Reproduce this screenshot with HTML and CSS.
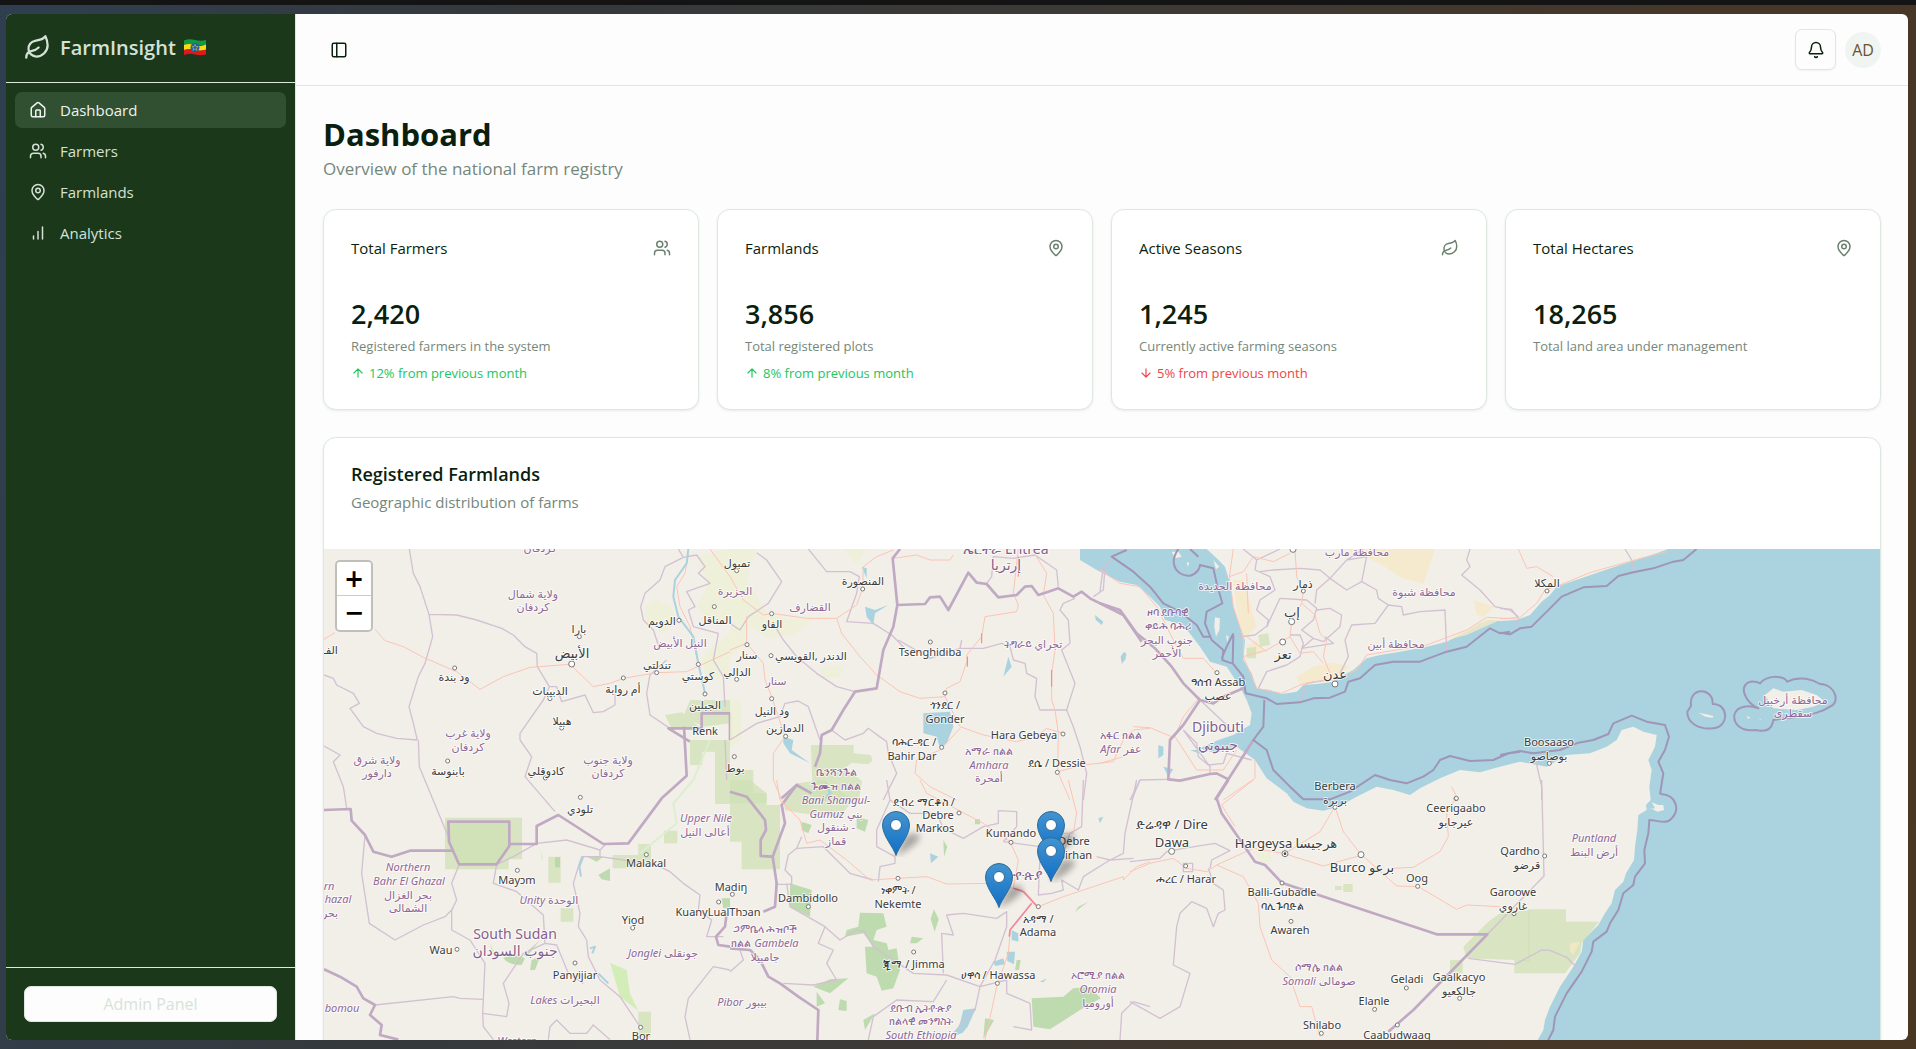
FILE: index.html
```html
<!DOCTYPE html>
<html lang="en">
<head>
<meta charset="utf-8">
<meta name="viewport" content="width=device-width, initial-scale=1">
<title>FarmInsight - Dashboard</title>
<link rel="stylesheet" href="styles.css">
</head>
<body>
<svg class="sprite" width="0" height="0" aria-hidden="true">
  <symbol id="leaf" viewBox="0 0 24 24"><path d="M11 20A7 7 0 0 1 9.8 6.1C15.5 5 17 4.48 19 2c1 2 2 4.18 2 8 0 5.5-4.78 10-10 10Z"/><path d="M2 21c0-3 1.85-5.36 5.08-6C9.5 14.52 12 13 13 12"/></symbol>
  <symbol id="house" viewBox="0 0 24 24"><path d="M15 21v-8a1 1 0 0 0-1-1h-4a1 1 0 0 0-1 1v8"/><path d="M3 10a2 2 0 0 1 .709-1.528l7-5.999a2 2 0 0 1 2.582 0l7 5.999A2 2 0 0 1 21 10v9a2 2 0 0 1-2 2H5a2 2 0 0 1-2-2z"/></symbol>
  <symbol id="users" viewBox="0 0 24 24"><path d="M16 21v-2a4 4 0 0 0-4-4H6a4 4 0 0 0-4 4v2"/><circle cx="9" cy="7" r="4"/><path d="M22 21v-2a4 4 0 0 0-3-3.87"/><path d="M16 3.13a4 4 0 0 1 0 7.75"/></symbol>
  <symbol id="pin" viewBox="0 0 24 24"><path d="M20 10c0 4.993-5.539 10.193-7.399 11.799a1 1 0 0 1-1.202 0C9.539 20.193 4 14.993 4 10a8 8 0 0 1 16 0"/><circle cx="12" cy="10" r="3"/></symbol>
  <symbol id="bars" viewBox="0 0 24 24"><path d="M12 20V10M18 20V4M6 20v-4"/></symbol>
  <symbol id="panel" viewBox="0 0 24 24"><rect x="3" y="3" width="18" height="18" rx="2"/><path d="M9 3v18"/></symbol>
  <symbol id="bell" viewBox="0 0 24 24"><path d="M10.268 21a2 2 0 0 0 3.464 0"/><path d="M3.262 15.326A1 1 0 0 0 4 17h16a1 1 0 0 0 .74-1.673C19.41 13.956 18 12.499 18 8A6 6 0 0 0 6 8c0 4.499-1.411 5.956-2.738 7.326"/></symbol>
  <symbol id="up" viewBox="0 0 24 24"><path d="m5 12 7-7 7 7M12 19V5"/></symbol>
  <symbol id="down" viewBox="0 0 24 24"><path d="M12 5v14M19 12l-7 7-7-7"/></symbol>
  <symbol id="marker" viewBox="0 0 50 46">
    <path d="M14 44 L24 24 Q36 20 38 26 Q36 34 14 45z" fill="#000" opacity=".3" filter="url(#soft)"/>
    <path d="M14 44.5C11.500 36 .5 25 .5 14a13.500 13.500 0 0 1 27 0C27.500 25 16.500 36 14 44.500z" fill="url(#pinfill)" stroke="#2e6c97"/>
    <circle cx="14" cy="14" r="5.500" fill="#fff" stroke="#2e6c97"/>
  </symbol>
  <linearGradient id="pinfill" x1="0" y1="0" x2="0" y2="1"><stop offset="0" stop-color="#4394d0"/><stop offset="1" stop-color="#126fc6"/></linearGradient>
  <filter id="soft" x="-30%" y="-30%" width="160%" height="160%"><feGaussianBlur stdDeviation="3"/></filter>
</svg>

<div class="window">
  <aside class="sidebar">
    <div class="brand">
      <svg class="icon brand-icon"><use href="#leaf"/></svg>
      <span class="brand-name">FarmInsight</span>
      <svg class="flag" viewBox="0 0 22 17" role="img" aria-label="Ethiopia">
        <path d="M0 1.500Q5-.5 11 1T22 1V6Q16 7 11 6T0 6z" fill="#129a43"/>
        <path d="M0 6Q5 4 11 6T22 5.500V11Q16 12.500 11 11T0 11z" fill="#fbdc12"/>
        <path d="M0 11Q5 9.500 11 11T22 10.500V15.500Q16 17 11 15.500T0 16z" fill="#e0181c"/>
        <circle cx="11" cy="8.500" r="4.500" fill="#1b5fb0"/>
        <path d="M11 5.200l.9 2.300h2.300l-1.900 1.500.8 2.400-2.100-1.500-2.100 1.500.8-2.400-1.900-1.500h2.300z" fill="none" stroke="#e8d53a" stroke-width=".5"/>
      </svg>
    </div>
    <nav class="nav">
      <a class="nav-link active" href="#dashboard"><svg class="icon"><use href="#house"/></svg>Dashboard</a>
      <a class="nav-link" href="#farmers"><svg class="icon"><use href="#users"/></svg>Farmers</a>
      <a class="nav-link" href="#farmlands"><svg class="icon"><use href="#pin"/></svg>Farmlands</a>
      <a class="nav-link" href="#analytics"><svg class="icon"><use href="#bars"/></svg>Analytics</a>
    </nav>
    <div class="sidebar-foot"><button class="admin" type="button">Admin Panel</button></div>
  </aside>

  <div class="page">
    <header class="topbar">
      <button class="toggle" type="button" aria-label="Toggle sidebar"><svg class="icon"><use href="#panel"/></svg></button>
      <div class="actions">
        <button class="bell" type="button" aria-label="Notifications"><svg class="icon"><use href="#bell"/></svg></button>
        <button class="avatar" type="button">AD</button>
      </div>
    </header>

    <main class="content">
      <div class="heading">
        <h1>Dashboard</h1>
        <p>Overview of the national farm registry</p>
      </div>

      <section class="stats">
        <article class="card stat">
          <div class="stat-head"><h2>Total Farmers</h2><svg class="icon"><use href="#users"/></svg></div>
          <p class="value">2,420</p>
          <p class="note">Registered farmers in the system</p>
          <p class="trend rise"><svg class="icon"><use href="#up"/></svg>12% from previous month</p>
        </article>
        <article class="card stat">
          <div class="stat-head"><h2>Farmlands</h2><svg class="icon"><use href="#pin"/></svg></div>
          <p class="value">3,856</p>
          <p class="note">Total registered plots</p>
          <p class="trend rise"><svg class="icon"><use href="#up"/></svg>8% from previous month</p>
        </article>
        <article class="card stat">
          <div class="stat-head"><h2>Active Seasons</h2><svg class="icon"><use href="#leaf"/></svg></div>
          <p class="value">1,245</p>
          <p class="note">Currently active farming seasons</p>
          <p class="trend fall"><svg class="icon"><use href="#down"/></svg>5% from previous month</p>
        </article>
        <article class="card stat">
          <div class="stat-head"><h2>Total Hectares</h2><svg class="icon"><use href="#pin"/></svg></div>
          <p class="value">18,265</p>
          <p class="note">Total land area under management</p>
        </article>
      </section>

      <section class="card map-card">
        <div class="map-head">
          <h2>Registered Farmlands</h2>
          <p>Geographic distribution of farms</p>
        </div>
        <div class="map">
          <svg class="map-art" viewBox="0 0 1556 560" role="img" aria-label="Map of Ethiopia and its neighbours">
            <g transform="scale(.333333)">
              <path class="sea" d="M2268 0L2268 33 2318 63 2388 98 2438 108 2478 143 2508 173 2523 213 2578 228 2628 293 2658 338 2708 353 2748 413 2768 453 2783 493 2778 528 2728 558 2683 573 2628 598 2673 613 2738 593 2793 633 2828 688 2888 733 2908 758 2948 778 2998 785 3043 773 3098 743 3158 713 3208 723 3258 738 3288 718 3348 688 3408 663 3468 670 3528 653 3588 638 3668 653 3728 618 3798 613 3848 593 3878 573 3893 543 3928 533 3958 548 3998 558 3993 593 3973 633 3983 663 3976 713 3980 753 3966 768 3968 783 3943 798 3940 843 3933 893 3930 933 3906 973 3898 998 3873 1023 3863 1063 3843 1093 3823 1128 3778 1173 3773 1208 3748 1253 3708 1313 3678 1373 3663 1413 3658 1443 3641 1473 3600 1680 4668 1680 4668 0 4033 0 3968 23 3888 48 3828 68 3728 103 3698 113 3678 138 3653 158 3618 198 3578 213 3528 216 3498 213 3468 223 3428 248 3368 278 3308 293 3228 308 3168 318 3128 328 3088 363 3058 378 3028 398 2978 405 2938 408 2918 428 2873 435 2838 423 2798 418 2783 373 2758 333 2763 273 2748 233 2728 173 2718 103 2703 53 2678 28 2648 0z"/>
              <g transform="translate(-42 -387)">
                <path class="farm" d="M1165 410L1260 387V610L1195 600 1160 560 1190 500zM1005 560L1040 540 1085 560 1100 600 1060 640 1005 600zM1175 710L1260 640V760L1190 790z"/>
                <path class="park" d="M1140 840h120v70l-80 10-60-30zM1065 885l50-8 60 50h-90z"/>
                <path class="thin" d="M298 387L310 460 330 500 357 583 368 650 345 730 325 770 297 860 310 910 322 960M357 583L440 585 500 600 575 625 610 645 645 680 680 700 682 740 718 800 740 800 755 845 825 825 850 878 880 875 915 855 915 815M718 800L700 840 630 940V960M42 765L70 775 80 795 130 820 148 850 120 865 160 920 200 940 260 955 322 960M1105 387L1120 412 1065 440 1050 480 1005 520 992 560 1000 600 1030 630 1050 690M1120 412L1160 405 1185 440 1165 460 1200 490 1130 515 1155 560 1135 570 1150 620 1225 640 1210 720 1240 770 1245 860M1070 720L1020 765 1010 820 1020 885 1080 925"/>
                <path class="road" d="M42 658L75 638M195 628L225 662 280 680 340 712 400 738 440 755 510 808 580 770 660 742 780 733 850 800 900 790 940 775 1040 758 1130 755 1260 695M1135 400L1125 460 1100 500 1110 560 1140 620 1165 733M1200 387L1260 470"/>
                <path class="river" d="M1135 387L1130 430 1095 480 1090 530 1105 590 1150 650 1165 730 1185 820"/>
                <path class="thick" d="M1140 965L1075 925H1175V880H1260V960"/>
                <g class="dots"><circle cx="808" cy="650" r="6"/><circle cx="785" cy="732" r="9"/><circle cx="434" cy="744" r="6"/><circle cx="720" cy="836" r="6"/><circle cx="940" cy="774" r="6"/><circle cx="755" cy="924" r="6"/><circle cx="1040" cy="758" r="6"/><circle cx="1165" cy="733" r="6"/><circle cx="1185" cy="822" r="6"/><circle cx="1107" cy="601" r="6"/><circle cx="1213" cy="560" r="6"/></g>
              </g>
              <g transform="translate(1218 -27)">
                <path class="farm" d="M0 27h80l-30 90 60 100 60 20 85-3-60 50-80 10-70-40-45 20zM0 230l50 10-10 80-40 30zM340 27h70l-30 50zM0 480l35 5v110l-35 30zM270 380h70l-10 30-50 5z"/>
                <path class="park" d="M243 615h128v25l50 5q15 20-10 28l-45-5-20 15 50 40-10 60H250l-5-100zM0 690h70v70h40v30H0z"/>
                <path class="water" d="M580 520l80-5 10 45-20 50-20 15-10-35-40-10zM405 200l30 10 40-15-40 25-5 35-20-25zM160 590l30 10-5 30 55 40-60-30-20-30zM1095 225l25 20-5 10-18-15zM1175 345l12-8v20l-12 15zM835 350l10 30-25 30zM395 80l15 5v30z"/>
                <path class="thin" d="M235 27L290 95H360L388 110 380 160 350 245 430 250 485 285 520 320M80 38L110 60 155 125 115 190 55 230 30 270 0 250M130 250L160 300 200 350 260 400 320 440 375 455M270 600L235 500 205 483 165 490 150 530 80 550 0 600M305 570L345 600 400 580 415 565 435 580 470 605 475 640 500 700 460 780M690 325L760 325 815 310 840 320 850 360 885 370 890 400 920 415 915 470 930 510H1010M505 300L600 355 690 325 695 300M790 50L850 55 915 45 980 90 985 140M790 50L785 110 770 130M1035 175L1000 190 990 210 1015 240 1020 310 995 330 1015 380 1035 430 1010 510 1030 560 1050 620 1070 700 1060 780M1090 170L1120 150 1125 80 1150 50"/>
                <path class="road" d="M490 55L560 45 600 60 660 60 670 45M490 30L440 50 400 80 398 145 380 195 320 235 230 235 125 220 100 225 40 180 0 110M320 235L335 280 390 350 440 405 510 455 570 475 645 470 650 445 690 425 712 360 710 345 755 290 765 230 860 215 865 195 850 160 865 27M645 470L690 560 760 585 860 605 920 590 950 565 1000 580M905 27L950 100 940 165 970 220 975 330 965 400 965 480 975 510 985 580 983 695 1020 780M690 565L630 630 560 660 555 700 600 740 680 780M983 695L1060 675 1150 665 1180 600 1210 570 1260 565M50 230V310L100 370 105 420 125 470 165 590 130 640 130 720 155 780M0 330L50 310"/>
                <path class="roadred" d="M712 350V380M865 50V110M965 390V440M755 280V310"/>
                <path class="thick" d="M510 27L488 55 502 195 585 192 600 172 630 170 655 210 715 98 740 128 770 132 805 172 860 165 885 140 905 138 925 165 955 155 985 145 1030 170 1055 155 1080 175 1180 225 1235 305M502 195L490 260 460 330 440 445 375 455 340 510 305 570 275 585 270 640 255 680M245 760L200 735 155 775"/>
                <g class="dots"><circle cx="20" cy="92" r="6"/><circle cx="398" cy="147" r="6"/><circle cx="125" cy="221" r="6"/><circle cx="51" cy="314" r="6"/><circle cx="123" cy="347" r="6"/><circle cx="20" cy="418" r="6"/><circle cx="125" cy="476" r="6"/><circle cx="167" cy="589" r="6"/><circle cx="13" cy="650" r="6"/><circle cx="601" cy="306" r="6"/><circle cx="645" cy="459" r="6"/><circle cx="635" cy="622" r="6"/><circle cx="999" cy="582" r="6"/><circle cx="982" cy="697" r="6"/></g>
              </g>
              <g transform="translate(2328 -27)">
                <path class="sand" d="M730 27h275l-35 105-70-20-60-42zM590 410l50-30 60-12 50 10-40 40-70 10-40 10zM1120 180l62 20-32 32-20-10zM400 120l30 0 40 140-40 40-20-90zM1040 300l80-40 40-22 40 2-100 45zM440 320l30-20 20 40-50 10z"/>
                <path class="park" d="M475 285l30-5 5 35-30 5zM440 325l28-5v35h-28z"/>
                <path class="land" d="M345 232l15 3-2 35-10 20-5-30zM378 285l8 5-4 18zM260 65l8 5-5 10zM340 60l18 20-10 8zM215 35l20 0 10 15-20 5z"/>
                <path class="water" d="M62 350l10-15 8 10-15 20zM175 615l15 5v25l-15 10zM190 680l30 8-15 22zM270 630l35 0-10 10z"/>
                <path class="thin" d="M300 480L380 555M250 570L290 610 295 650 325 675 370 670 380 640 455 660M205 718L120 720 95 780M0 155L10 80M430 27L470 60 465 90 510 110 525 150 480 180 470 210 505 240 500 260 540 175 620 180 650 205 640 240 605 270 640 295 670 305 720 260 725 225 690 205 650 210M480 95L520 90 600 85 660 90 690 115 740 60 800 50 785 125M690 115L650 150 645 190M690 115L740 150 785 125 830 150 835 175 865 195 825 250 755 255 735 300 745 350 720 400M865 195L905 200 910 225 960 215 1035 210 1040 335M1110 27L1100 60 1110 80 1085 105 1140 150 1185 200 1230 210 1255 230M505 255L465 285 400 293M570 285L600 285 610 310 600 350 560 375 500 395 475 445M640 295L605 325 700 310 675 290M600 487L620 430 680 420M470 60L540 27M740 60L790 27M330 702V680L250 570"/>
                <path class="road" d="M400 27L388 110 430 95 460 50 520 65 570 40M440 100L445 220M388 110L400 200 430 290 430 350 470 445 545 460 600 435 640 425 700 420 770 390 800 345 980 315 1100 270 1160 232 1250 237M585 27L590 110 610 155 605 190 645 225 660 280 680 300 670 350 690 400M605 190L575 245 570 290 500 330 430 350M440 290L500 335M570 290L600 340 640 335 670 370M0 90L60 130 120 140 170 200 220 300 250 355 310 355 350 400M300 470L250 530 225 590 290 690 370 690 410 630M100 560L150 563 215 590M0 670L70 650M465 660V715L370 780"/>
                <path class="thick" d="M0 190L60 210 110 280 165 325 215 380 250 430 300 480 250 555 210 600 205 718 240 722 330 702 350 700 385 718 345 780M385 718L460 600M300 480L340 490 370 470 430 445"/>
                <path class="marine" d="M80 30L35 50 100 95 150 140 190 190 240 215 290 255 310 290 330 290M235 27C200 80 240 110 270 107C295 100 300 80 300 75L340 85 350 130 367 190 320 215 315 250 335 300 370 330 367 360 395 370M270 27L295 50M400 280L380 320 365 355M400 285L398 370 430 410 437 460 500 475 530 492 600 487 640 475 690 473 735 455 745 425 780 415 825 375 880 365 960 365 1040 335 1100 320 1170 265 1200 280 1230 275M493 480L490 560 460 600 500 630 520 690 570 740 610 778 690 778 750 755 825 705 870 720 920 730 970 710 1000 690 1020 660 1050 648 1110 663 1180 660 1225 640 1260 635"/>
                <g class="dots"><circle cx="610" cy="153" r="6"/><circle cx="575" cy="245" r="9"/><circle cx="548" cy="306" r="9"/><circle cx="705" cy="432" r="9"/><circle cx="351" cy="398" r="6"/><circle cx="579" cy="28" r="9"/><circle cx="1068" cy="776" r="6"/></g>
              </g>
              <g transform="translate(3528 -27)">
                <path class="land" d="M795 465L820 445 850 455 905 450 950 465 975 485 940 500 890 510 820 505zM595 518l20 4 26 6-4 5-20-3zM738 528l12 4-4 5zM778 537l6 2-4 2z"/>
                <path class="thin" d="M375 27L395 60 400 97M0 205L35 208 55 235 60 265M108 665L125 740V780"/>
                <path class="road" d="M55 27L80 85 110 80 160 110M0 237L60 232 110 190 135 150 180 135 270 98 350 75 440 50 500 35"/>
                <path class="marine" d="M0 278L30 283 60 265 95 260 150 205 185 170 250 142 320 138 355 108 400 97 460 85 520 65 550 60 590 27M0 645L60 633 100 640 180 630 235 608 280 600 325 582 340 550 395 527 440 545 495 555 507 590 495 630 475 665 490 700 480 762M573 497C565 440 640 440 638 492C685 490 690 560 640 565C600 570 560 550 562 515zM775 505C740 490 715 445 745 427C765 420 780 430 780 430C800 405 850 405 862 425C900 405 940 420 960 432C1010 435 1020 490 990 500C960 520 950 515 930 525L820 540C815 575 790 575 765 570C720 575 700 550 703 525C710 495 750 495 775 505z"/>
                <g class="dots"><circle cx="141" cy="153" r="6"/><circle cx="148" cy="670" r="6"/></g>
              </g>
              <g transform="translate(-42 573)">
                <path class="park" d="M405 233h231v125h-40v30H405zM715 350h37v78h-37zM985 312h38v68h-38zM908 345h90v40h-90zM752 505h38v40h-38zM985 815h38v75h-38zM1140 0h90v35h-53v40h-37zM1215 0h45v192h-45zM1062 272h40v38h-40z"/>
                <path class="park" d="M416 245h182v70l-38 58H447l-30-70z"/>
                <path class="wood" d="M735 352h15v30h-15zM830 350h50l-20 15zM865 405l35-20v38l-25-5zM580 655q30-20 65 0l-10 20q-40 0-55-20zM690 600l-50 45 10 5zM660 690l5-30 25-10-15 40zM1235 475h25v30h-20z"/>
                <path class="meadow" d="M900 668L950 690 960 760 985 812 930 770zM540 610l15 30-10-5zM690 325l10 35-5-5z"/>
                <path class="meadow-line" d="M1200 0L1150 120 1090 190 1100 250 990 340"/>
                <path class="thin" d="M42 18L90 45 70 65 100 140 110 205M325 0L328 80 415 290M630 0L665 50 645 110 735 215M165 285L155 400 178 550 255 600 340 555 405 530 430 505M447 375L425 430 440 480 425 510V570L480 600 525 670 518 820 520 860 550 899M195 795L430 770 450 775 518 778M560 373L550 430 620 455 700 525 705 610 740 615 775 700 820 730M705 610L640 640 580 730 597 790 590 830 518 820M560 373L610 350 680 310 770 300 870 330 885 315M870 330V350L815 350 805 380 790 430 810 520 805 560 830 600 835 650 870 720 930 770 970 830 990 860M870 350L940 360 1050 380 1080 395 1120 430 1170 465 1165 510 1205 540 1190 590 1240 590M715 899L720 860 740 840 780 880 830 880 850 855 900 899M1260 690L1210 680 1135 775 1125 830 1140 899M1245 0L1250 120"/>
                <path class="thick" d="M42 210L122 207 125 242 165 285 190 335 245 350 300 332 428 332M415 245H598V318L560 373H447L417 305zM598 312H680V258L745 225 880 312 955 310 1055 175 1130 107 1122 -40M42 688L90 710 140 740 160 775 195 795 180 825 215 855 210 885 265 899M1250 520L1245 560 1218 590 1225 615 1260 620"/>
                <path class="river" d="M820 350l-12 30 5 30M840 625l15-5-8 20M865 700l30 30"/>
                <g class="dots"><circle cx="413" cy="63" r="6"/><circle cx="706" cy="114" r="6"/><circle cx="811" cy="172" r="6"/><circle cx="1009" cy="344" r="6"/><circle cx="622" cy="391" r="6"/><circle cx="968" cy="564" r="6"/><circle cx="441" cy="628" r="6"/><circle cx="795" cy="669" r="6"/><circle cx="992" cy="862" r="6"/><circle cx="1226" cy="486" r="6"/></g>
              </g>
              <g transform="translate(1218 693)">
                <path class="park" d="M0 0L60 0 110 40V75H150V268H35V185H0zM160 60L200 10 280 0 370 60 330 110 215 100 165 90z"/>
                <path class="wood" d="M180 310L245 330 240 410 180 380zM215 125l30 10-10 25-20-10zM380 110l35 10-10 35-25-10zM390 398L460 400 470 440 440 450 430 480 470 490 475 510 500 505 510 570 490 625 455 632 440 590 410 580 405 500 430 500 400 460 345 470 350 450 385 440zM250 620L300 598 355 595 300 640zM260 635l25 35-25 10zM330 658l20 5v30l-25-3zM612 388l14 30-12 38-12-40zM545 470l35 5-20 15-20 0zM640 180l12 20-10 30zM905 655L1000 650 1030 625 1080 620 1112 655 1050 690 960 748 910 740zM765 715L792 720 760 778zM400 720l35-20-30 50zM860 540l12 0-5 30-12 0zM1045 380l30-15-40 30zM735 118h15v15h-15z"/>
                <path class="water" d="M845 450l20 10v25l-20-5zM830 515l25 0-3 38-20-10zM790 545l30-10 5 18-30 5zM700 690l38-5-25 55-15 18-30 12 22-40zM600 220l25 10-22 20zM1105 115l15-5-10 20zM930 605l20-10-10 12zM285 0l10 40-20 25 30-25z"/>
                <path class="thin" d="M135 313L185 313V290L165 270 175 225 200 205 215 170M200 205L280 200 360 280 430 300M470 0L480 60 540 100 620 100 640 145 700 175 760 140 805 130V92L860 95V140L820 185M480 60L440 150V200L495 230V250L450 260 445 305M320 600L250 615 160 610M285 440L265 490 310 510 290 550 320 600M170 310L180 380 285 440 330 480 380 450 410 460M400 450L430 500 550 580 650 585 750 620 830 600V640L900 670 905 750 850 740M640 580L635 460 670 465 650 405 700 400 800 415 830 395V440L795 540 750 620 735 690 660 770M1170 780L1175 700 1210 665 1260 680M415 780L430 710 500 660 610 665 650 600M1060 0L1055 140 1020 160 1000 220M930 230L925 345 965 340 1000 330 995 300 1045 330 1060 290 1140 240 1210 235M1220 0L1185 160 1180 220 1140 240 1100 230M820 185L930 200M0 575L40 540 30 510"/>
                <path class="thick" d="M0 35L50 50 105 120 108 150 92 180V228L128 230 165 130 155 75 200 15 245 40M128 230L140 310 135 380 100 395M0 505L60 510 90 540 115 590 150 610 205 650 265 690 262 780"/>
                <path class="road" d="M140 0L150 60 210 120 230 190 270 180 350 240 420 300 590 290 650 312 790 310 850 325M570 0L590 40 760 130 840 185 865 240 850 325 880 330 925 380M925 380L1000 350 1180 290 1180 300 1220 260 1260 245M840 460L835 520 800 620 785 690 765 780M1015 0L1040 100 1030 160 960 160"/>
                <path class="motorway" d="M850 325L880 335 920 378M905 370L840 450 838 470"/>
                <g class="dots"><circle cx="7" cy="343" r="6"/><circle cx="235" cy="380" r="6"/><circle cx="504" cy="295" r="6"/><circle cx="551" cy="516" r="6"/><circle cx="687" cy="99" r="6"/><circle cx="843" cy="187" r="6"/><circle cx="925" cy="380" r="6"/><circle cx="802" cy="610" r="6"/></g>
              </g>
              <g transform="translate(2418 693)">
                <path class="park" d="M1000 500L1075 425 1110 400 1200 390V545L1155 540 1010 535zM960 540h38v40h-38zM640 312h28v24h-28zM615 318h20v12h-20z"/>
                <path class="farm" d="M370 215l50 0 5 30-30 5z"/>
                <path class="thin" d="M1235 0L1242 288 1072 463M1015 535L1155 553M240 265L245 240 300 212 255 190 160 205 110 215 90 235 0 245M235 265L250 310 280 330 285 390 265 400 250 440 230 385 185 365 150 400 140 440 130 555 180 580 150 680 90 715 0 665M30 0L0 60M160 250h28v25h-28z"/>
                <path class="road" d="M0 275L60 250 130 235 170 265 230 275 260 255 340 290 385 370 390 440 425 540 480 590 510 680 545 680 570 770M260 255L370 205 460 220 580 258 660 235 700 225M465 220L570 155 615 80 640 155 690 220 800 318 865 320 980 388 1010 375 1110 380M790 265L850 262 930 215 955 170 950 100 980 50 965 20M370 0L275 75 315 140"/>
                <path class="thick" d="M295 0L260 55 275 100 320 165 375 245 405 255 455 308 920 463H1072L850 690 775 755"/>
                <g class="dots"><circle cx="615" cy="82" r="6"/><circle cx="979" cy="55" r="6"/><circle cx="125" cy="214" r="9"/><circle cx="465" cy="221" r="9"/><circle cx="693" cy="224" r="9"/><circle cx="863" cy="319" r="6"/><circle cx="167" cy="258" r="6"/><circle cx="456" cy="309" r="6"/><circle cx="483" cy="424" r="6"/><circle cx="829" cy="624" r="6"/><circle cx="989" cy="655" r="6"/><circle cx="734" cy="688" r="6"/><circle cx="574" cy="760" r="6"/><circle cx="802" cy="735" r="6"/><circle cx="1244" cy="228" r="6"/><circle cx="1152" cy="401" r="6"/></g>
                <circle cx="465" cy="221" r="4" fill="#444"/>
              </g>
              <g transform="translate(3528 693)">
                <path class="park" d="M85 388H198V425H297L245 490 240 520 195 580H43V540H85z"/>
                <path class="sand" d="M210 490l30-5-20 40-10-10z"/>
                <path class="land" d="M440 88l25-3-10-18 20 8 15 0 2 15-20 5-15-8z"/>
                <path class="thin" d="M45 553L125 510 150 511 200 532 240 572"/>
                <path class="marine" d="M480 40L483 42C530 45 540 90 515 115C500 135 470 120 448 120L445 160 433 210 435 250 405 290 400 315 370 340 355 390 330 430 320 455 280 485 275 515 245 575 200 640 165 710 160 750 145 780 130 860"/>
              </g>
            </g>

            <g class="labels">
              <g transform="translate(-14 -129)">
                <text class="region" x="230" y="132">كردفان</text>
                <text class="region" x="223" y="178">ولاية شمال</text><text class="region" x="223" y="191">كردفان</text>
                <text x="269" y="213">بارا</text><text class="city" x="262" y="238">الأبيض</text><text x="144" y="261">ود بندة</text>
                <text x="240" y="275">الدبيبات</text><text x="313" y="273">أم روابة</text><text x="252" y="305">هبيلا</text>
                <text x="347" y="249">تندلتي</text><text x="388" y="260">كوستي</text><text x="395" y="289">الجبلين</text>
                <text x="352" y="205">الدويم</text><text x="405" y="204">المناقل</text><text class="region" x="370" y="227">النيل الأبيض</text>
                <text x="395" y="315">Renk</text><text x="19" y="234">الف</text><text class="region" x="158" y="317">ولاية غرب</text>
              </g>
              <g transform="translate(-14 191)">
                <text class="region" x="158" y="11">كردفان</text><text class="region" x="67" y="24">ولاية شرق</text><text class="region" x="67" y="37">دارفور</text>
                <text x="138" y="35">بابنوسة</text><text x="236" y="35">كادوقلي</text><text class="region" x="298" y="24">ولاية جنوب</text><text class="region" x="298" y="37">كردفان</text>
                <text x="270" y="73">تلودي</text><text class="region latin" x="396" y="82">Upper Nile</text><text class="region" x="395" y="96">أعالى النيل</text>
                <text x="336" y="127">Malakal</text><text class="region latin" x="98" y="131">Northern</text><text class="region latin" x="99" y="145">Bahr El Ghazal</text>
                <text class="region" x="98" y="159">بحر الغزال</text><text class="region" x="98" y="172">الشمالى</text><text x="207" y="144">Mayɔm</text>
                <text class="region" x="239" y="164"><tspan class="latin">Unity</tspan> الوحدة</text><text x="323" y="184">Yio̱d</text>
                <text class="country" x="205" y="199">South Sudan</text><text class="country" x="205" y="216">جنوب السودان</text>
                <text x="131" y="214">Wau</text><text x="265" y="239">Panyijiar</text><text class="region" x="353" y="217"><tspan class="latin">Jonglei</tspan> جونقلى</text>
                <text class="region" x="255" y="264"><tspan class="latin">Lakes</tspan> البحيرات</text><text x="331" y="300">Bor</text><text class="region latin" x="207" y="305">Western</text>
                <text class="region latin" x="32" y="272">bomou</text><text class="region latin" x="19" y="150">rn</text><text class="region latin" x="28" y="163">hazal</text><text class="region" x="20" y="177">بحر</text>
                <text x="408" y="176">KuanyLualThɔan</text><text x="421" y="151">Madiŋ</text>
              </g>
              <g transform="translate(406 -9)">
                <text x="7" y="27">تمبول</text><text class="region" x="5" y="55">الجزيرة</text><text x="133" y="45">المنصورة</text>
                <text class="region" x="80" y="71">القضارف</text><text x="42" y="88">الفاو</text><text x="17" y="119">سنار</text><text x="81" y="120">الدندر ,القويسي</text>
                <text x="7" y="136">الدالي</text><text class="region" x="46" y="145">سنار</text><text x="42" y="175">ود النيل</text><text x="55" y="192">الدمازين</text><text x="5" y="232">بوط</text>
                <text x="200" y="116">Tsenghidiba</text><text class="region" x="303" y="108">ትግራይ تجراي</text>
                <text class="country" x="276" y="14">ኤርትራ Eritrea</text><text class="country" x="276" y="30">إرتريا</text>
                <text x="215" y="169">ጎንደር /</text><text x="215" y="183">Gonder</text><text x="184" y="206">ባሕር-ዳር /</text><text x="182" y="220">Bahir Dar</text>
                <text x="294" y="199">Hara Gebeya</text><text class="region" x="259" y="215">አማራ ክልል</text><text class="region latin" x="259" y="229">Amhara</text><text class="region" x="259" y="242">أمحرة</text>
                <text x="327" y="227">ደሴ / Dessie</text><text class="region" x="106" y="236">ቤንሻንጉል</text><text class="region" x="106" y="250">ጉሙዝ ክልል</text>
                <text class="region" x="391" y="199">አፋር ክልል</text><text class="region" x="391" y="213"><tspan class="latin">Afar</tspan> عفر</text>
              </g>
              <g transform="translate(776 -9)">
                <text class="region" x="135" y="50">محافظة الحديدة</text><text class="region" x="257" y="16">محافظة مأرب</text><text x="203" y="48">ذمار</text>
                <text class="city" x="192" y="77">إب</text><text class="city" x="183" y="119">تعز</text><text class="city" x="235" y="139">عدن</text>
                <text class="region" x="324" y="56">محافظة شبوة</text><text class="region" x="296" y="108">محافظة أبين</text>
                <text class="region" x="68" y="76">ዞባ ደቡባዊ</text><text class="region" x="68" y="90">ቀይሕ ባሕሪ</text><text class="region" x="67" y="104">جنوب البحر</text><text class="region" x="67" y="117">الأحمر</text>
                <text x="118" y="146">ዓሰብ Assab</text><text x="118" y="160">عصب</text><text class="country" x="118" y="192">Djibouti</text><text class="country" x="118" y="210">جيبوتي</text>
              </g>
              <g transform="translate(1176 -9)">
                <text x="47" y="47">المكلا</text><text x="49" y="206">Boosaaso</text><text x="49" y="220">بوصاصو</text>
                <text class="region" x="293" y="164">محافظة أرخبيل</text><text class="region" x="293" y="177">سقطرى</text>
              </g>
              <g transform="translate(406 231)">
                <text class="region latin" x="106" y="24">Bani Shangul-</text><text class="region" x="106" y="38"><tspan class="latin">Gumuz</tspan> بني</text><text class="region" x="106" y="51">شنقول -</text><text class="region" x="106" y="65">قماز</text>
                <text x="194" y="26">ደብረ ማርቆስ /</text><text x="208" y="39">Debre</text><text x="205" y="52">Markos</text><text x="281" y="57">Kumando</text>
                <text x="344" y="65">Debre</text><text x="345" y="79">Birhan</text><text class="country" x="288" y="100">ኢትዮጵያ</text>
                <text x="168" y="114">ነቀምት /</text><text x="168" y="128">Nekemte</text><text x="78" y="122">Dambidollo</text>
                <text class="region" x="35" y="153">ጋምቤላ ሕዝቦች</text><text class="region" x="35" y="167">ክልል <tspan class="latin">Gambela</tspan></text><text class="region" x="35" y="181">جامبيلا</text>
                <text x="308" y="143">አዳማ /</text><text x="308" y="156">Adama</text><text x="184" y="188">ጂማ / Jimma</text><text x="268" y="199">ሀዋሳ / Hawassa</text>
                <text class="region" x="368" y="199">ኦሮሚያ ክልል</text><text class="region latin" x="368" y="213">Oromia</text><text class="region" x="368" y="227">أوروميا</text>
                <text class="region" x="191" y="232">ደቡብ ኢትዮጵያ</text><text class="region" x="191" y="245">ክልላዊ መንግስት</text><text class="region latin" x="191" y="259">South Ethiopia</text>
                <text class="region" x="12" y="226"><tspan class="latin">Pibor</tspan> بيبور</text>
              </g>
              <g transform="translate(806 231)">
                <text x="205" y="10">Berbera</text><text x="205" y="24">بربرة</text><text x="326" y="32">Ceerigaabo</text><text x="326" y="46">عيرجابو</text>
                <text class="city" x="42" y="49">ድሬዳዋ / Dire</text><text class="city" x="42" y="67">Dawa</text><text class="city" x="156" y="68">Hargeysa هرجيسا</text><text class="city" x="232" y="92">Burco برعو</text>
                <text x="287" y="102">Oog</text><text x="56" y="103">ሐረር / Harar</text><text x="152" y="116">Balli-Gubadle</text><text x="152" y="130">ባሊጉባድል</text><text x="160" y="154">Awareh</text>
                <text class="region" x="189" y="191">ሶማሌ ክልል</text><text class="region" x="189" y="205"><tspan class="latin">Somali</tspan> صومالى</text>
                <text x="277" y="203">Geladi</text><text x="329" y="201">Gaalkacyo</text><text x="329" y="215">جالكعيو</text><text x="244" y="225">Elanle</text><text x="192" y="249">Shilabo</text><text x="267" y="259">Caabudwaaq</text>
                <text x="390" y="75">Qardho</text><text x="397" y="89">قرضو</text><text x="383" y="116">Garoowe</text><text x="383" y="130">غاروي</text>
                <text class="region latin" x="464" y="62">Puntland</text><text class="region" x="464" y="76">أرض البنط</text>
              </g>
            </g>

            <use href="#marker" x="558" y="262" width="50" height="46"/>
            <use href="#marker" x="713" y="262" width="50" height="46"/>
            <use href="#marker" x="713" y="288" width="50" height="46"/>
            <use href="#marker" x="661" y="314" width="50" height="46"/>
          </svg>
          <div class="zoom">
            <button type="button" aria-label="Zoom in">+</button>
            <button type="button" aria-label="Zoom out">−</button>
          </div>
        </div>
      </section>
    </main>
  </div>
</div>
</body>
</html>
```
FILE: styles.css
```css
* { box-sizing: border-box; }
html, body { height: 100%; }
body {
  margin: 0;
  padding: 9px 8px 9px 6px;
  border-top: 5px solid #141414;
  background: linear-gradient(100deg, #2f3f50, #35393c 25%, #3c3a37 50%, #46372a 80%, #4a3723);
  font-family: "Open Sans", "Noto Sans", sans-serif;
  font-size: 16px;
  color: #0a1f0d;
}
h1, h2, p { margin: 0; }
button { font: inherit; cursor: pointer; }
.sprite { position: absolute; }
.icon {
  width: 18px; height: 18px; flex: none;
  fill: none; stroke: currentColor; stroke-width: 2;
  stroke-linecap: round; stroke-linejoin: round;
}

.window { display: flex; height: 100%; overflow: hidden; border-radius: 6px; background: #fdfdfd; }

.sidebar {
  display: flex; flex-direction: column; flex: 0 0 290px;
  border-right: 1px solid #dce9df;
  background: #1b381b; color: #d5e1d6;
}
.brand { display: flex; align-items: center; height: 69px; padding: 0 18px 2px; border-bottom: 1px solid #dce9df; }
.brand-icon { width: 27px; height: 27px; margin-right: 9px; }
.brand-name { font-size: 20px; font-weight: 600; }
.flag { width: 22px; height: 17px; margin-left: 8px; }
.nav { display: flex; flex-direction: column; flex: 1; gap: 5px; padding: 9px; }
.nav-link {
  display: flex; align-items: center; gap: 13px; height: 36px; padding: 0 14px 1px;
  border-radius: 7px; color: inherit; font-size: 15px; text-decoration: none;
}
.nav-link.active { background: #315031; color: #edf3ee; }
.sidebar-foot { padding: 18px; border-top: 1px solid #dce9df; }
.admin {
  display: block; width: 100%; height: 36px; padding: 0;
  border: 1px solid #dce9df; border-radius: 7px; background: #fdfdfd; color: #d7e3d9;
}

.page { display: flex; flex-direction: column; flex: 1; min-width: 0; }
.topbar {
  display: flex; align-items: center; justify-content: space-between; flex: none;
  height: 72px; padding: 0 27px; border-bottom: 1px solid #dce9df;
}
.toggle { display: grid; place-items: center; width: 32px; height: 32px; padding: 0; border: 0; background: none; color: #0a1f0d; }
.actions { display: flex; align-items: center; gap: 9px; }
.bell {
  display: grid; place-items: center; width: 41px; height: 41px; padding: 0;
  border: 1px solid #dce9df; border-radius: 7px; background: #fdfdfd; color: #0a1f0d;
  box-shadow: 0 1px 2px rgba(0, 0, 0, .05);
}
.avatar { width: 36px; height: 36px; padding: 0; border: 0; border-radius: 50%; background: #f0f5f1; color: #6b5233; }

.content { flex: 1; min-height: 0; padding: 27px; overflow-y: auto; scrollbar-width: none; }
.heading { margin-bottom: 27px; }
h1 { font-size: 31px; line-height: 43px; font-weight: 700; }
.heading p { font-size: 17px; line-height: 26px; color: #75877a; }
.card {
  border: 1px solid #dce9df; border-radius: 13px; background: #fff;
  box-shadow: 0 1px 3px rgba(0, 0, 0, .08);
}
.stats { display: grid; grid-template-columns: repeat(4, 1fr); gap: 18px; margin-bottom: 27px; }
.stat { padding: 27px 27px 26px; }
.stat-head { display: flex; align-items: center; justify-content: space-between; margin-bottom: 37px; color: #6c806e; }
.stat-head h2 { font-size: 15px; line-height: 22px; font-weight: 500; color: #0a1f0d; }
.value { font-size: 27px; line-height: 36px; font-weight: 600; }
.note { margin-top: 4px; font-size: 13px; line-height: 20px; color: #75877a; }
.trend { display: flex; align-items: center; gap: 4px; margin-top: 7px; font-size: 13px; line-height: 20px; }
.trend .icon { width: 14px; height: 14px; }
.rise { color: #22c55e; }
.fall { color: #ef4444; }

.map-card { overflow: hidden; }
.map-head { padding: 27px 27px 35px; }
.map-head h2 { font-size: 18px; line-height: 18px; font-weight: 600; }
.map-head p { margin-top: 7px; font-size: 15px; line-height: 24px; color: #75877a; }
.map { position: relative; background: #f2efe9; }
.map-art { display: block; width: 100%; height: auto; }
.zoom {
  position: absolute; top: 11px; left: 11px; display: flex; flex-direction: column;
  border: 2px solid rgba(0, 0, 0, .2); border-radius: 5px; background-clip: padding-box;
}
.zoom button {
  width: 34px; height: 34px; padding: 0; border: 0; background: #fff; color: #000;
  font: bold 24px/34px "DejaVu Sans", sans-serif;
}
.zoom button:first-child { border-bottom: 1px solid #ccc; border-radius: 3px 3px 0 0; }
.zoom button:last-child { border-radius: 0 0 3px 3px; }

.sea, .water { fill: #aad3df; }
.land { fill: #f2efe9; }
.sand { fill: #f5e9c6; opacity: .8; }
.farm { fill: #eef0d5; opacity: .8; }
.park { fill: #cfe0b4; opacity: .75; }
.wood { fill: #b5d6a5; opacity: .85; }
.meadow { fill: #d3edb8; }
.thin, .thick, .marine, .road, .roadred, .motorway, .river, .meadow-line { fill: none; stroke-linejoin: round; }
.thin { stroke: #d2c1d2; stroke-width: 4; }
.thick { stroke: #c0a9c2; stroke-width: 8; }
.marine { stroke: #9f95b7; stroke-width: 6; }
.road { stroke: #fbc4b5; stroke-width: 3; }
.roadred { stroke: #f4846c; stroke-width: 3; }
.motorway { stroke: #f0879a; stroke-width: 5; }
.river { stroke: #aad3df; stroke-width: 6; }
.meadow-line { stroke: #dbefcf; stroke-width: 6; }
.dots circle { fill: #fff; stroke: #777; stroke-width: 3; }

.labels {
  font-family: "Noto Sans", "DejaVu Sans", sans-serif; font-size: 11px; fill: #3c3c3c;
  text-anchor: middle; stroke: rgba(255, 255, 255, .7); stroke-width: 2px;
  stroke-linejoin: round; paint-order: stroke;
}
.labels .region { fill: #8f6795; }
.labels .latin { font-style: italic; }
.labels .city { font-size: 13px; }
.labels .country { fill: #865f8b; font-size: 14px; }
```
